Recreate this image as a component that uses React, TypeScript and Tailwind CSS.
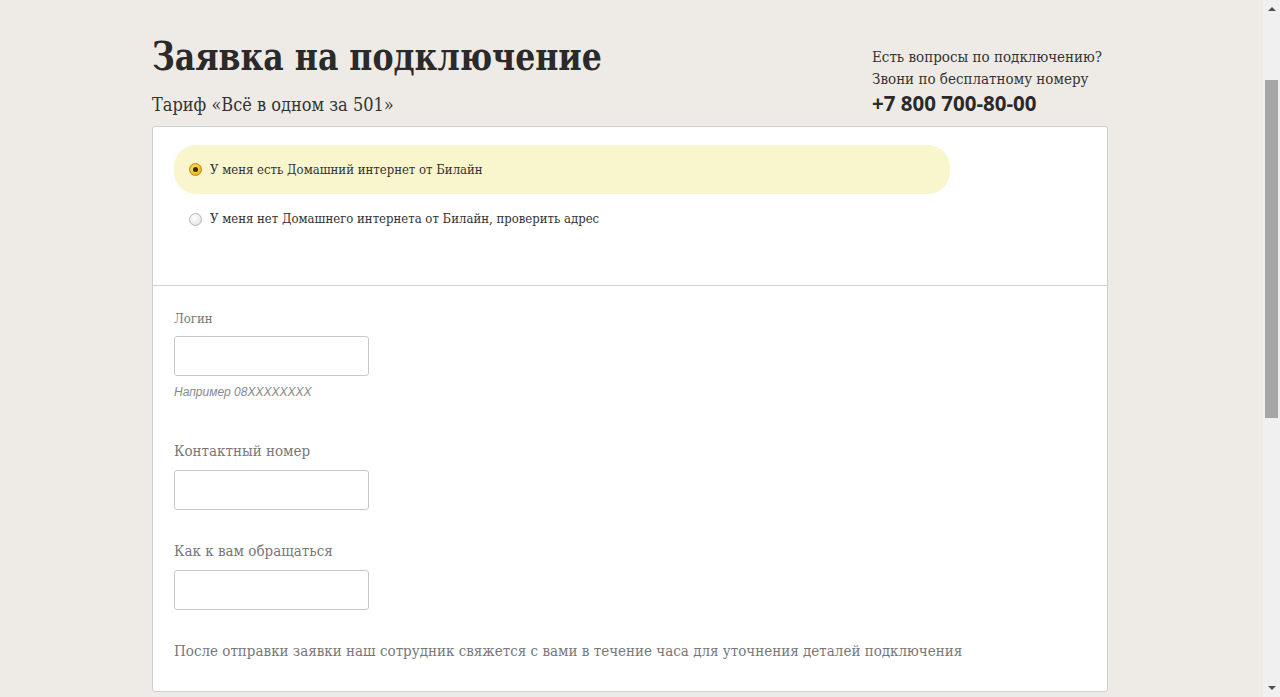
import React from "react";

const serif = { fontFamily: '"DejaVu Serif Condensed", "DejaVu Serif", "Liberation Serif", serif' };

function Radio({ checked }: { checked?: boolean }) {
  if (checked) {
    return (
      <span className="flex h-[13px] w-[13px] shrink-0 items-center justify-center rounded-full border border-[#b98a10] bg-[radial-gradient(circle_at_40%_35%,#ffe066,#e6a800)]">
        <span className="h-[5px] w-[5px] rounded-full bg-[#3a2a00]" />
      </span>
    );
  }
  return (
    <span className="h-[13px] w-[13px] shrink-0 rounded-full border border-[#b5b5b5] bg-[radial-gradient(circle_at_40%_35%,#ffffff,#dcdcdc)]" />
  );
}

function Field({ label, hint, big }: { label: string; hint?: string; big?: boolean }) {
  return (
    <div className="flex flex-col">
      <div
        className={big ? "text-[15px] leading-[20px] text-[#777]" : "text-[13px] leading-[18px] text-[#777]"}
        style={serif}
      >
        {label}
      </div>
      <div
        className={
          big
            ? "mt-[9px] h-[40px] w-[195px] rounded-[3px] border border-[#c8c8c8] bg-white"
            : "mt-[8px] h-[40px] w-[195px] rounded-[3px] border border-[#c8c8c8] bg-white"
        }
      />
      {hint && (
        <div
          className="mt-[8px] text-[12px] italic leading-[16px] text-[#888]"
          style={{ fontFamily: '"Liberation Sans", Arial, sans-serif' }}
        >
          {hint}
        </div>
      )}
    </div>
  );
}

export default function App() {
  return (
    <div className="flex h-[697px] w-[1280px] overflow-hidden bg-[#eeebe7]">
      <div className="flex-1 pl-[152px] pr-[155px]">
        <div className="flex justify-between pt-[34px]">
          <div className="flex flex-col">
            <h1
              className="origin-left scale-x-[0.9] whitespace-nowrap text-[39px] font-bold leading-[44px] text-[#2a2a2a]"
              style={serif}
            >
              Заявка на подключение
            </h1>
            <div className="mt-[15px] text-[18px] leading-[24px] text-[#333]" style={serif}>
              Тариф «Всё в одном за 501»
            </div>
          </div>
          <div className="flex w-[236px] flex-col pt-[12px] text-[#333]">
            <div className="text-[15px] leading-[22px]" style={serif}>
              Есть вопросы по подключению?
            </div>
            <div className="text-[15px] leading-[22px]" style={serif}>
              Звони по бесплатному номеру
            </div>
            <div
              className="mt-[1px] text-[20.5px] font-bold leading-[24px] text-[#2a2a2a]"
              style={{ fontFamily: '"Open Sans", "Liberation Sans", sans-serif' }}
            >
              +7 800 700-80-00
            </div>
          </div>
        </div>

        <div className="mt-[9px] rounded-[3px] border border-[#cfcfcf] bg-white">
          <div className="h-[158px] px-[21px] pt-[18px]">
            <div className="flex h-[49px] w-[776px] items-center gap-[8px] rounded-[22px] bg-[#f9f5cc] pl-[15px]">
              <Radio checked />
              <span className="text-[13px] text-[#333]" style={serif}>
                У меня есть Домашний интернет от Билайн
              </span>
            </div>
            <div className="flex h-[50px] items-center gap-[8px] pl-[15px]">
              <Radio />
              <span className="text-[13px] text-[#333]" style={serif}>
                У меня нет Домашнего интернета от Билайн, проверить адрес
              </span>
            </div>
          </div>
          <div className="border-t border-[#cfcfcf] px-[21px] pt-[24px] pb-[30px]">
            <Field label="Логин" hint="Например 08XXXXXXXX" />
            <div className="mt-[41px]">
              <Field label="Контактный номер" big />
            </div>
            <div className="mt-[31px]">
              <Field label="Как к вам обращаться" big />
            </div>
            <div className="mt-[31px] text-[15px] leading-[20px] text-[#777]" style={serif}>
              После отправки заявки наш сотрудник свяжется с вами в течение часа для уточнения деталей подключения
            </div>
          </div>
        </div>
      </div>

      {/* window scrollbar */}
      <div className="flex w-[17px] shrink-0 flex-col items-center bg-[#f0f0f0]">
        <div className="flex h-[17px] items-center justify-center">
          <svg width="8" height="5" viewBox="0 0 8 5">
            <path d="M0 5 L4 1 L8 5 Z" fill="#505050" />
          </svg>
        </div>
        <div className="mt-[63px] h-[338px] w-[13px] bg-[#a6a6a6]" />
        <div className="flex-1" />
        <div className="flex h-[17px] items-center justify-center">
          <svg width="8" height="5" viewBox="0 0 8 5">
            <path d="M0 0 L4 4 L8 0 Z" fill="#505050" />
          </svg>
        </div>
      </div>
    </div>
  );
}
